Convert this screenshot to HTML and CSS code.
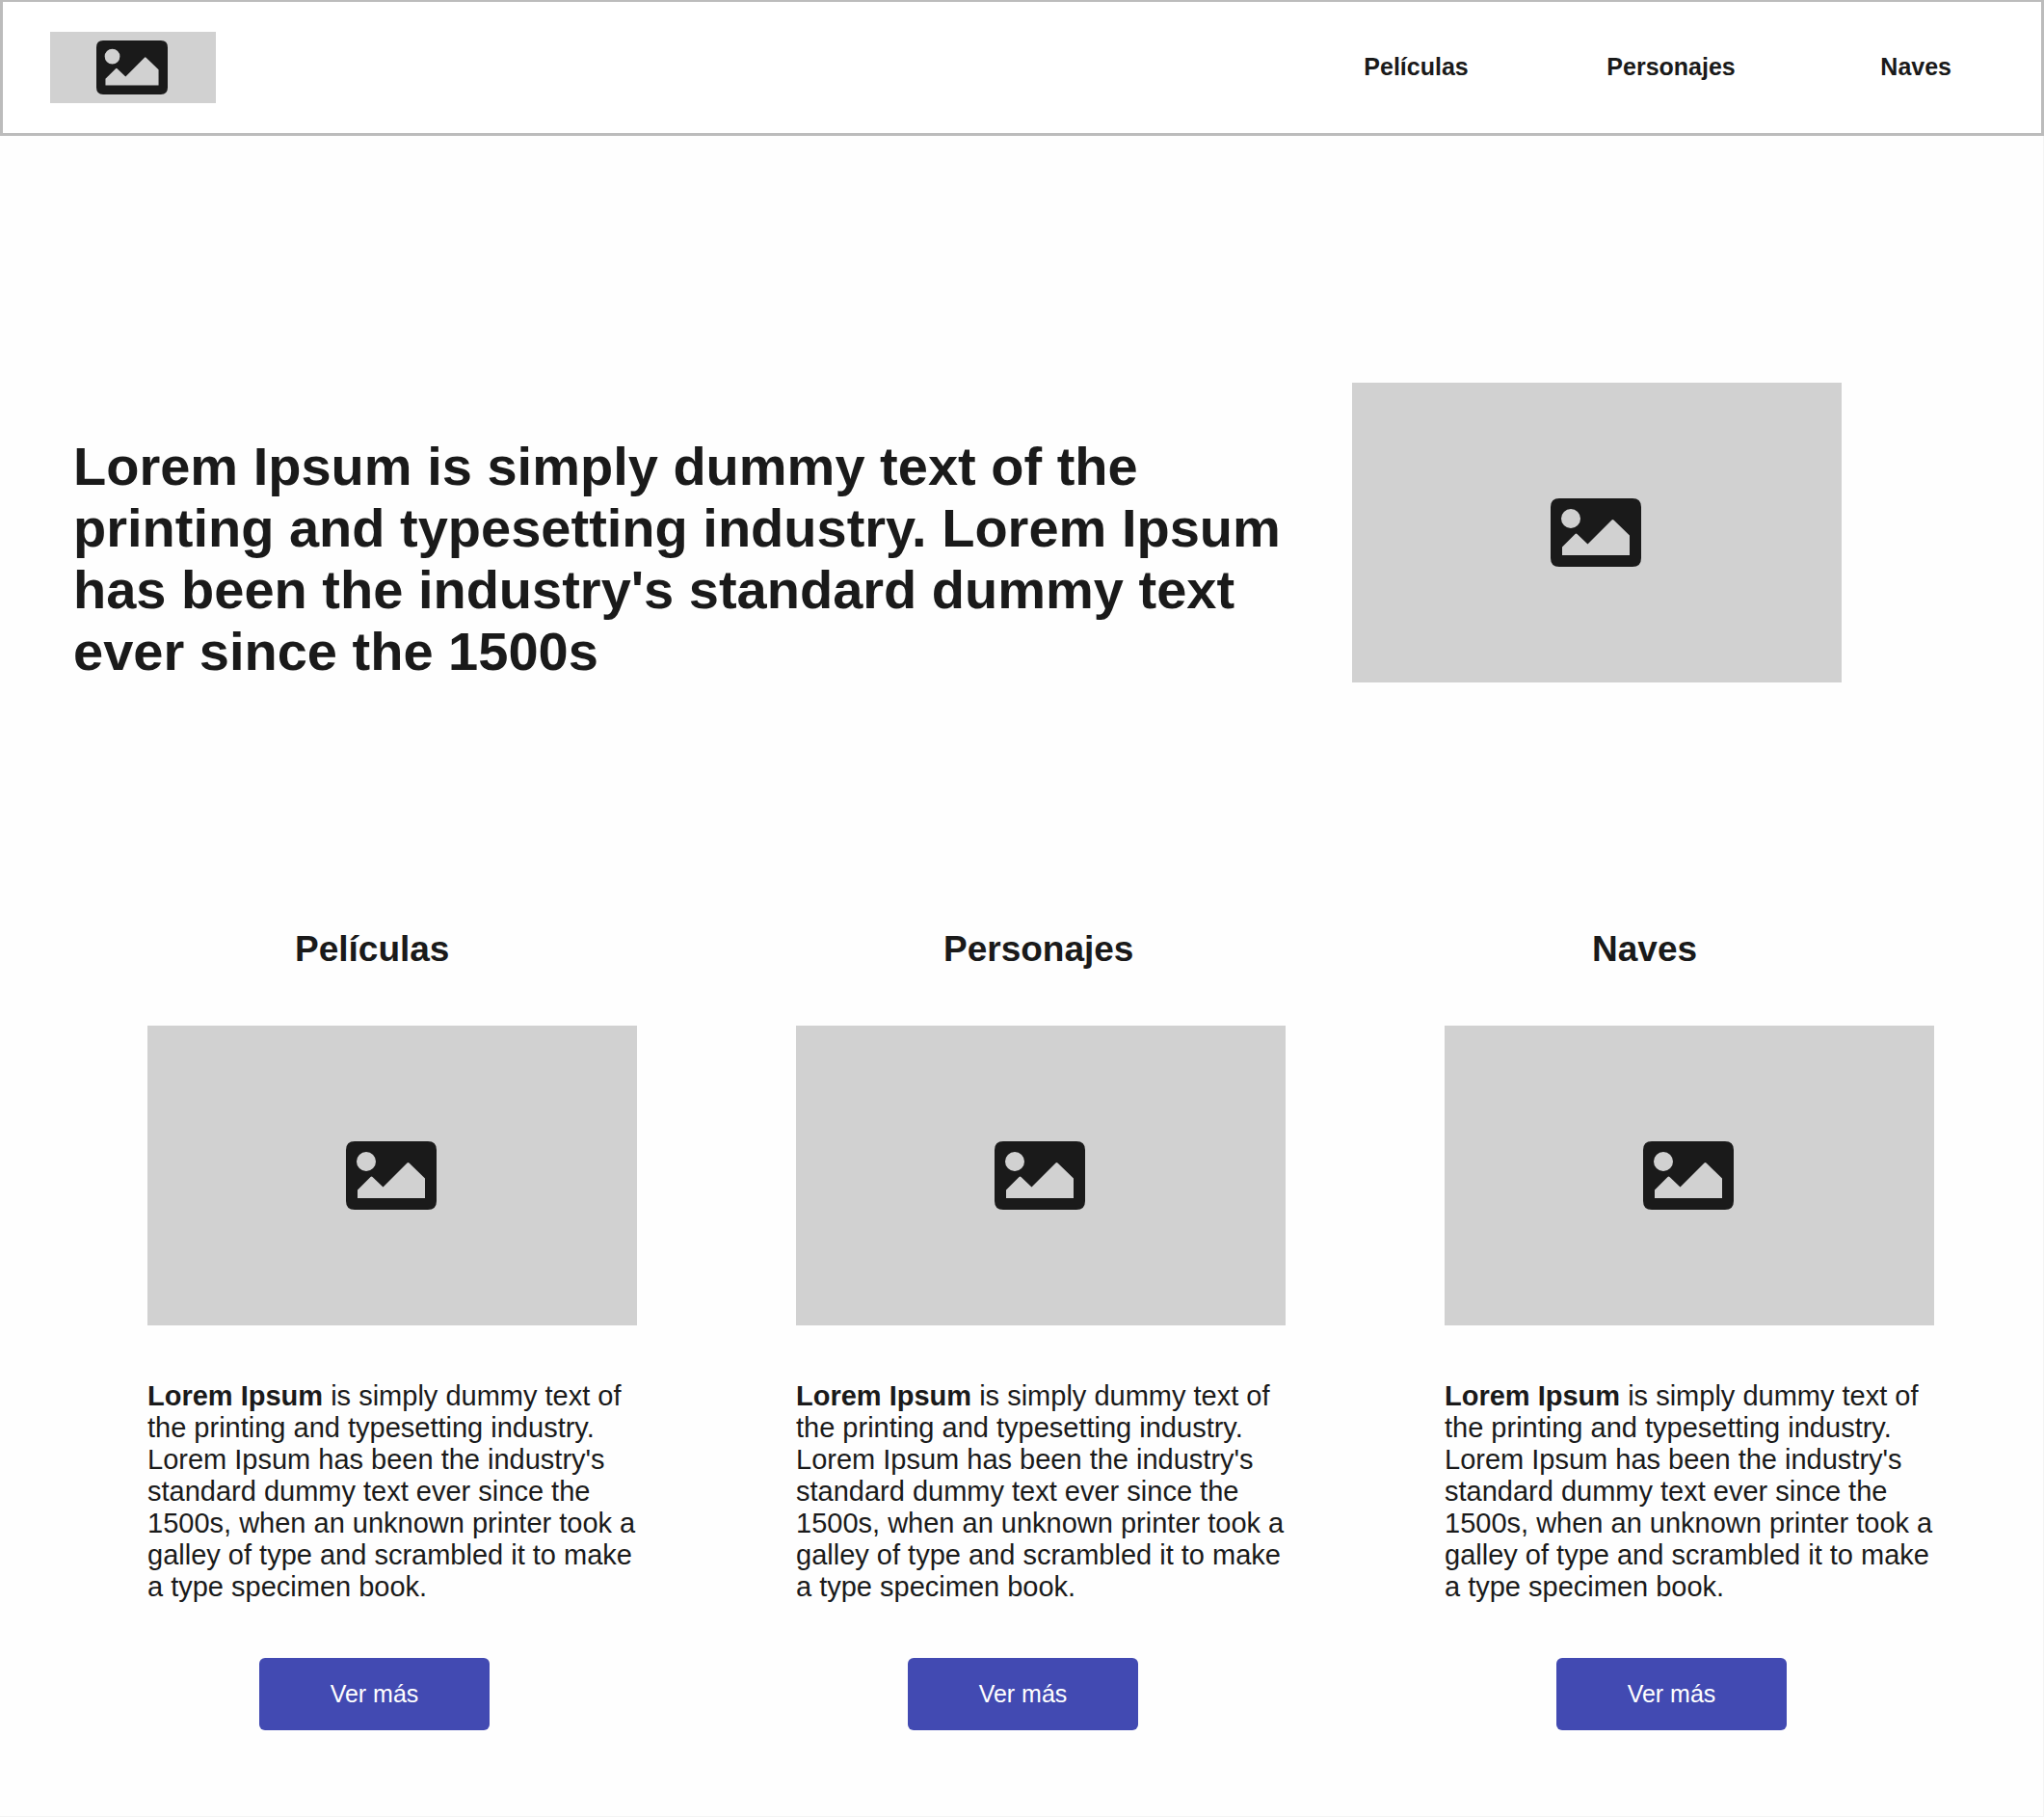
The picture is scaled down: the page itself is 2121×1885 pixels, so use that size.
FILE: index.html
```html
<!DOCTYPE html>
<html lang="es">
<head>
  <meta charset="utf-8">
  <meta name="viewport" content="width=device-width, initial-scale=1">
  <title>Películas, Personajes y Naves</title>
  <link rel="stylesheet" href="styles.css">
</head>
<body>
  <svg class="sprite" aria-hidden="true">
    <symbol id="picture" viewBox="0 0 94 71">
      <path fill-rule="evenodd" d="M9 0H85Q94 0 94 9V62Q94 71 85 71H9Q0 71 0 62V9Q0 0 9 0ZM21 11A10 10 0 1 0 21 31A10 10 0 1 0 21 11ZM12 59V50.500L25.500 37Q26.500 36 27.500 37L38.500 47.500L63.500 22.500Q64.500 21.500 65.500 22.500L82 38.500V59Z"/>
    </symbol>
  </svg>

  <header class="header">
    <a class="logo placeholder" href="#" aria-label="Inicio"><svg class="logo-icon" aria-hidden="true"><use href="#picture"/></svg></a>
    <nav class="nav">
      <a href="#peliculas">Películas</a>
      <a href="#personajes">Personajes</a>
      <a href="#naves">Naves</a>
    </nav>
  </header>

  <main>
    <section class="hero">
      <h1 class="hero-title">Lorem Ipsum is simply dummy text of the printing and typesetting industry. Lorem Ipsum has been the industry's standard dummy text ever since the 1500s</h1>
      <div class="picture placeholder"><svg class="picture-icon" aria-hidden="true"><use href="#picture"/></svg></div>
    </section>

    <section class="cards">
      <article class="card" id="peliculas">
        <h2 class="card-title">Películas</h2>
        <div class="picture placeholder"><svg class="picture-icon" aria-hidden="true"><use href="#picture"/></svg></div>
        <p class="card-text"><strong>Lorem Ipsum</strong> is simply dummy text of the printing and typesetting industry. Lorem Ipsum has been the industry's standard dummy text ever since the 1500s, when an unknown printer took a galley of type and scrambled it to make a type specimen book.</p>
        <button class="button" type="button">Ver más</button>
      </article>
      <article class="card" id="personajes">
        <h2 class="card-title">Personajes</h2>
        <div class="picture placeholder"><svg class="picture-icon" aria-hidden="true"><use href="#picture"/></svg></div>
        <p class="card-text"><strong>Lorem Ipsum</strong> is simply dummy text of the printing and typesetting industry. Lorem Ipsum has been the industry's standard dummy text ever since the 1500s, when an unknown printer took a galley of type and scrambled it to make a type specimen book.</p>
        <button class="button" type="button">Ver más</button>
      </article>
      <article class="card" id="naves">
        <h2 class="card-title">Naves</h2>
        <div class="picture placeholder"><svg class="picture-icon" aria-hidden="true"><use href="#picture"/></svg></div>
        <p class="card-text"><strong>Lorem Ipsum</strong> is simply dummy text of the printing and typesetting industry. Lorem Ipsum has been the industry's standard dummy text ever since the 1500s, when an unknown printer took a galley of type and scrambled it to make a type specimen book.</p>
        <button class="button" type="button">Ver más</button>
      </article>
    </section>
  </main>
</body>
</html>
```
FILE: styles.css
```css
* {
  box-sizing: border-box;
}

body {
  margin: 0;
  background: #fefefe;
  color: #1a1a1a;
  font-family: "Liberation Sans", Arial, sans-serif;
}

h1,
h2,
p {
  margin: 0;
}

.sprite {
  position: absolute;
  width: 0;
  height: 0;
}

.placeholder {
  display: flex;
  align-items: center;
  justify-content: center;
  padding-right: 2px;
  background: #d1d1d1;
  color: #1a1a1a;
  fill: currentColor;
}

.header {
  display: flex;
  align-items: center;
  justify-content: space-between;
  padding: 31px 93px 31px 49px;
  border: 3px solid #bcbcbc;
  border-top-width: 2px;
  background: #fff;
}

.logo {
  width: 172px;
  height: 74px;
}

.logo-icon {
  width: 74px;
  height: 56px;
}

.nav {
  display: grid;
  grid-template-columns: 252px 284px auto;
  padding-bottom: 2px;
}

.nav a {
  color: inherit;
  font-size: 25px;
  font-weight: 700;
  line-height: 28px;
  text-decoration: none;
}

main {
  border-right: 1px solid #f4f4f4;
  border-bottom: 1px solid #f4f4f4;
}

.hero {
  display: flex;
  align-items: flex-end;
  gap: 64px;
  padding: 256px 209px 0 76px;
}

.hero-title {
  flex: 1;
  font-size: 56px;
  line-height: 64px;
}

.picture {
  flex: none;
  width: 508px;
  height: 311px;
}

.picture-icon {
  width: 94px;
  height: 71px;
}

.cards {
  display: flex;
  flex-wrap: wrap;
  justify-content: space-between;
  gap: 57px;
  padding: 255px 113px 89px 153px;
}

.card {
  display: flex;
  flex-direction: column;
  align-items: flex-start;
  gap: 57px;
  width: 508px;
}

.card-title {
  padding-left: 153px;
  font-size: 37px;
  line-height: 44px;
}

.card-text {
  font-size: 29px;
  line-height: 33px;
}

.button {
  width: 239px;
  height: 75px;
  margin-left: 116px;
  padding: 0;
  border: 0;
  border-radius: 6px;
  background: #424ab2;
  color: #fff;
  font: inherit;
  font-size: 25px;
}
```
